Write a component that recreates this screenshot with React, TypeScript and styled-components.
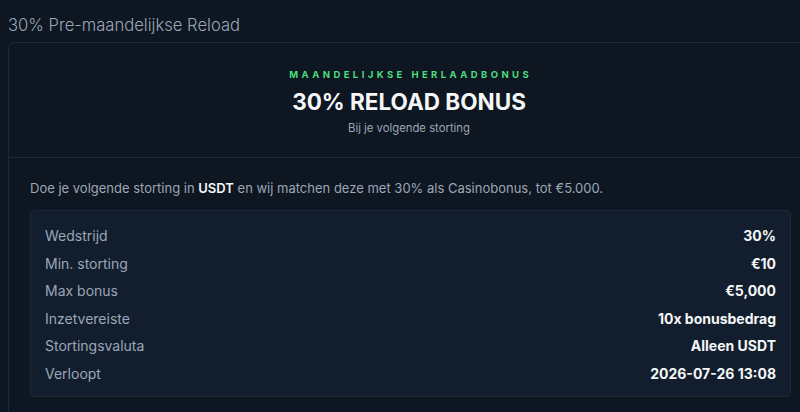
import React from 'react';
import styled, { createGlobalStyle } from 'styled-components';

const color = {
  page: '#0e1621',
  line: '#1e2935',
  box: '#121e2d',
  boxLine: '#1c2837',
  muted: '#9ba6b7',
  white: '#f4f6f8',
  green: '#4ade80',
};

const GlobalStyle = createGlobalStyle`
  body {
    margin: 0;
    background: ${color.page};
    font-family: Inter, "Noto Sans", "Liberation Sans", sans-serif;
    overflow: hidden;
  }
`;

const Page = styled.div`
  padding: 14px 8px 0 8px;
  width: 800px;
`;

const PageTitle = styled.h1`
  margin: 0 0 6px 0;
  font-size: 16.6px;
  line-height: 22px;
  font-weight: 300;
  color: ${color.muted};
`;

const Card = styled.div`
  width: 800px;
  border: 1px solid ${color.line};
  border-radius: 6px;
  min-height: 400px;
`;

const Hero = styled.div`
  display: flex;
  flex-direction: column;
  align-items: center;
  padding: 26px 0 22px 0;
  border-bottom: 1px solid ${color.line};
`;

const Eyebrow = styled.div`
  font-size: 9.5px;
  font-weight: 700;
  letter-spacing: 0.36em;
  margin-right: -0.36em;
  color: ${color.green};
  line-height: 12px;
`;

const HeroTitle = styled.h2`
  margin: 7px 0 0 0;
  font-size: 22.5px;
  line-height: 28px;
  font-weight: 700;
  color: ${color.white};
`;

const HeroSub = styled.div`
  margin-top: 5px;
  font-size: 11.3px;
  line-height: 14px;
  color: ${color.muted};
`;

const Body = styled.div`
  padding: 21px 18px 0 21px;
`;

const Intro = styled.p`
  margin: 0 0 13px 0;
  font-size: 13px;
  line-height: 18px;
  color: ${color.muted};

  strong {
    color: ${color.white};
    font-weight: 600;
  }
`;

const InfoBox = styled.div`
  display: flex;
  flex-direction: column;
  padding: 11px 14px 9px 14px;
  background: ${color.box};
  border: 1px solid ${color.boxLine};
  border-radius: 4px;
`;

const InfoRow = styled.div`
  display: flex;
  justify-content: space-between;
  align-items: center;
  height: 27.5px;
  font-size: 14px;
`;

const Label = styled.span`
  color: ${color.muted};
`;

const Value = styled.span`
  color: ${color.white};
  font-weight: 700;
`;

const rows: [string, string][] = [
  ['Wedstrijd', '30%'],
  ['Min. storting', '€10'],
  ['Max bonus', '€5,000'],
  ['Inzetvereiste', '10x bonusbedrag'],
  ['Stortingsvaluta', 'Alleen USDT'],
  ['Verloopt', '2026-07-26 13:08'],
];

const App: React.FC = () => {
  return (
    <>
      <GlobalStyle />
      <Page>
        <PageTitle>30% Pre-maandelijkse Reload</PageTitle>
        <Card>
          <Hero>
            <Eyebrow>MAANDELIJKSE HERLAADBONUS</Eyebrow>
            <HeroTitle>30% RELOAD BONUS</HeroTitle>
            <HeroSub>Bij je volgende storting</HeroSub>
          </Hero>
          <Body>
            <Intro>
              Doe je volgende storting in <strong>USDT</strong> en wij matchen
              deze met 30% als Casinobonus, tot €5.000.
            </Intro>
            <InfoBox>
              {rows.map(([label, value]) => (
                <InfoRow key={label}>
                  <Label>{label}</Label>
                  <Value>{value}</Value>
                </InfoRow>
              ))}
            </InfoBox>
          </Body>
        </Card>
      </Page>
    </>
  );
};

export default App;
